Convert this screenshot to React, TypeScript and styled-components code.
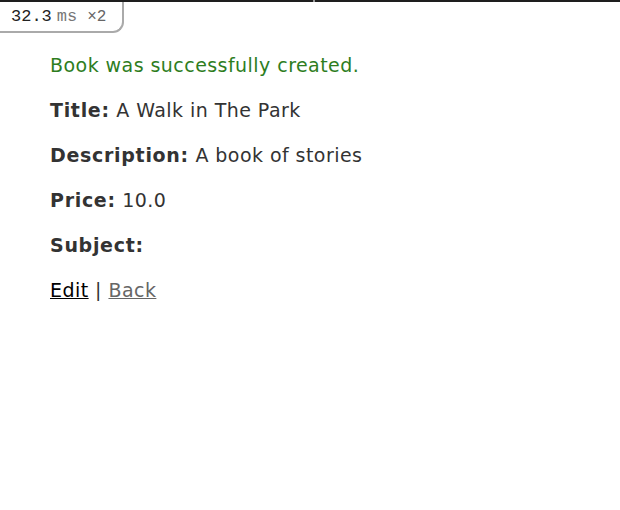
import React from "react";
import styled, { createGlobalStyle } from "styled-components";

const Global = createGlobalStyle`
  html, body { margin: 0; padding: 0; background: #fff; }
  body { font-family: "DejaVu Sans", Verdana, sans-serif; color: #333; }
`;

const TopBar = styled.div`
  height: 2px;
  background: #1e1e1e;
  display: flex;
`;

const BarGap = styled.span`
  width: 2px;
  height: 2px;
  margin-left: 313px;
  background: #999;
`;

const Badge = styled.div`
  position: absolute;
  top: 2px;
  left: 0;
  box-sizing: border-box;
  width: 124px;
  height: 31px;
  padding: 0 0 0 11px;
  display: flex;
  align-items: center;
  background: #fff;
  border: 2px solid #aaa;
  border-top: none;
  border-left: none;
  border-bottom-right-radius: 11px;
  font-family: "Liberation Mono", "DejaVu Sans Mono", monospace;
`;

const Ms = styled.span`
  color: #222;
  font-size: 17px;
`;

const Unit = styled.span`
  color: #777;
  font-size: 17px;
  margin-left: 5px;
`;

const Count = styled.span`
  color: #666;
  font-size: 16px;
  margin-left: 10px;
`;

const Main = styled.main`
  padding: 52px 0 0 50px;
  font-size: 19px;
  letter-spacing: 0.45px;
`;

const Notice = styled.p`
  margin: 0 0 23px;
  color: #2e7d1e;
  line-height: 22px;
`;

const Field = styled.p`
  margin: 0 0 23px;
  line-height: 22px;
  & > strong { font-weight: bold; letter-spacing: 0.7px; }
`;

const Links = styled.p`
  margin: 0;
  line-height: 22px;
`;

const Link = styled.a<{ $muted?: boolean }>`
  color: ${(p) => (p.$muted ? "#666" : "#000")};
  text-decoration: underline;
`;

export default function App() {
  return (
    <>
      <Global />
      <TopBar>
        <BarGap />
      </TopBar>
      <Badge>
        <Ms>32.3</Ms>
        <Unit>ms</Unit>
        <Count>×2</Count>
      </Badge>
      <Main>
        <Notice>Book was successfully created.</Notice>
        <Field>
          <strong>Title:</strong> A Walk in The Park
        </Field>
        <Field>
          <strong>Description:</strong> A book of stories
        </Field>
        <Field>
          <strong>Price:</strong> 10.0
        </Field>
        <Field>
          <strong>Subject:</strong>
        </Field>
        <Links>
          <Link href="#">Edit</Link> | <Link href="#" $muted>Back</Link>
        </Links>
      </Main>
    </>
  );
}
